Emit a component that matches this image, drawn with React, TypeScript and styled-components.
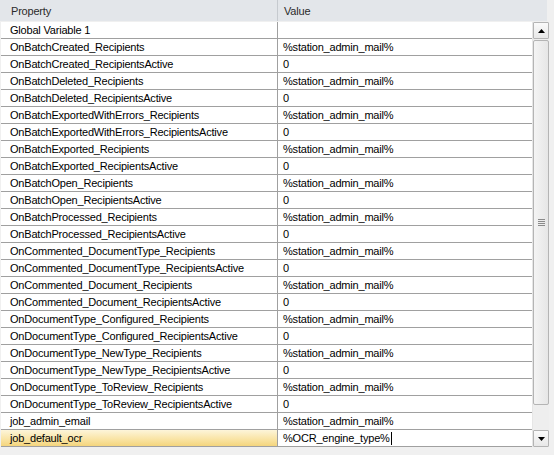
import React from "react";
import styled, { createGlobalStyle } from "styled-components";

const Global = createGlobalStyle`
  html, body { margin: 0; padding: 0; background: #f0f0f0; }
  body { font-family: "Liberation Sans", Arial, sans-serif; font-size: 11px; color: #000; letter-spacing: -0.2px; }
`;

const Frame = styled.div`
  width: 554px;
  height: 455px;
  background: #f0f0f0;
  display: flex;
  flex-direction: column;
`;

const Header = styled.div`
  display: grid;
  grid-template-columns: 277px 1px 269px;
  height: 21px;
  width: 547px;
  background: #e3e6ea;
  border-bottom: 1px solid #f0f0f0;
`;

const HeaderCell = styled.div`
  display: flex;
  align-items: center;
  padding-left: ${(p: { $pad: number }) => p.$pad}px;
  color: #2b2b2b;
  font-size: 11px;
`;

const HeaderDivider = styled.div`
  background: #c6cacf;
`;

const Body = styled.div`
  display: flex;
  height: 425px;
`;

const Rows = styled.div`
  width: 531px;
  margin-left: 1px;
  background: #fff;
  display: flex;
  flex-direction: column;
`;

const Row = styled.div`
  display: grid;
  grid-template-columns: 276px 1px 254px;
  height: 17px;
  box-sizing: border-box;
  border-bottom: 1px solid #a0a0a0;
`;

const Cell = styled.div<{ $selected?: boolean }>`
  display: flex;
  align-items: center;
  white-space: nowrap;
  overflow: hidden;
  padding-left: 9px;
  background: ${(p) =>
    p.$selected ? "linear-gradient(#fdf5da, #f9e3a2 60%, #f4d57d)" : "#fff"};
`;

const ValueCell = styled(Cell)`
  padding-left: 5px;
`;

const VLine = styled.div`
  background: #a0a0a0;
`;

const Caret = styled.span`
  display: inline-block;
  width: 1px;
  height: 13px;
  background: #000;
  margin-left: 1px;
`;

const ScrollBar = styled.div`
  width: 16px;
  background: #eeeeee;
  display: flex;
  flex-direction: column;
  border-left: 1px solid #e6e6e6;
`;

const ScrollButton = styled.div`
  height: 17px;
  box-sizing: border-box;
  border: 1px solid #b4b4b4;
  background: linear-gradient(#fafafa, #e8e8e8);
  display: flex;
  align-items: center;
  justify-content: center;
  border-radius: 1px;
`;

const Track = styled.div`
  flex: 1;
  display: flex;
  flex-direction: column;
`;

const Thumb = styled.div`
  height: 365px;
  margin-top: 1px;
  box-sizing: border-box;
  border: 1px solid #b4b4b4;
  border-radius: 2px;
  background: linear-gradient(90deg, #f4f4f4, #e6e6e6);
  display: flex;
  flex-direction: column;
  align-items: center;
  justify-content: center;
  gap: 1px;
`;

const Grip = styled.div`
  width: 7px;
  height: 1px;
  background: #8a8a8a;
`;

const rows: [string, string][] = [
  ["Global Variable 1", ""],
  ["OnBatchCreated_Recipients", "%station_admin_mail%"],
  ["OnBatchCreated_RecipientsActive", "0"],
  ["OnBatchDeleted_Recipients", "%station_admin_mail%"],
  ["OnBatchDeleted_RecipientsActive", "0"],
  ["OnBatchExportedWithErrors_Recipients", "%station_admin_mail%"],
  ["OnBatchExportedWithErrors_RecipientsActive", "0"],
  ["OnBatchExported_Recipients", "%station_admin_mail%"],
  ["OnBatchExported_RecipientsActive", "0"],
  ["OnBatchOpen_Recipients", "%station_admin_mail%"],
  ["OnBatchOpen_RecipientsActive", "0"],
  ["OnBatchProcessed_Recipients", "%station_admin_mail%"],
  ["OnBatchProcessed_RecipientsActive", "0"],
  ["OnCommented_DocumentType_Recipients", "%station_admin_mail%"],
  ["OnCommented_DocumentType_RecipientsActive", "0"],
  ["OnCommented_Document_Recipients", "%station_admin_mail%"],
  ["OnCommented_Document_RecipientsActive", "0"],
  ["OnDocumentType_Configured_Recipients", "%station_admin_mail%"],
  ["OnDocumentType_Configured_RecipientsActive", "0"],
  ["OnDocumentType_NewType_Recipients", "%station_admin_mail%"],
  ["OnDocumentType_NewType_RecipientsActive", "0"],
  ["OnDocumentType_ToReview_Recipients", "%station_admin_mail%"],
  ["OnDocumentType_ToReview_RecipientsActive", "0"],
  ["job_admin_email", "%station_admin_mail%"],
  ["job_default_ocr", "%OCR_engine_type%"],
];

const Arrow = ({ up }: { up: boolean }) => (
  <svg width="7" height="4" viewBox="0 0 7 4">
    <polygon points={up ? "3.5,0 7,4 0,4" : "0,0 7,0 3.5,4"} fill="#000" />
  </svg>
);

export default function App() {
  return (
    <Frame>
      <Global />
      <Header>
        <HeaderCell $pad={11}>Property</HeaderCell>
        <HeaderDivider />
        <HeaderCell $pad={6}>Value</HeaderCell>
      </Header>
      <Body>
        <Rows>
          {rows.map(([k, v], i) => {
            const sel = i === rows.length - 1;
            return (
              <Row key={k}>
                <Cell $selected={sel}>{k}</Cell>
                <VLine />
                <ValueCell>
                  {v}
                  {sel && <Caret />}
                </ValueCell>
              </Row>
            );
          })}
        </Rows>
        <ScrollBar>
          <ScrollButton>
            <Arrow up />
          </ScrollButton>
          <Track>
            <Thumb>
              <Grip />
              <Grip />
              <Grip />
              <Grip />
            </Thumb>
          </Track>
          <ScrollButton>
            <Arrow up={false} />
          </ScrollButton>
        </ScrollBar>
      </Body>
    </Frame>
  );
}
